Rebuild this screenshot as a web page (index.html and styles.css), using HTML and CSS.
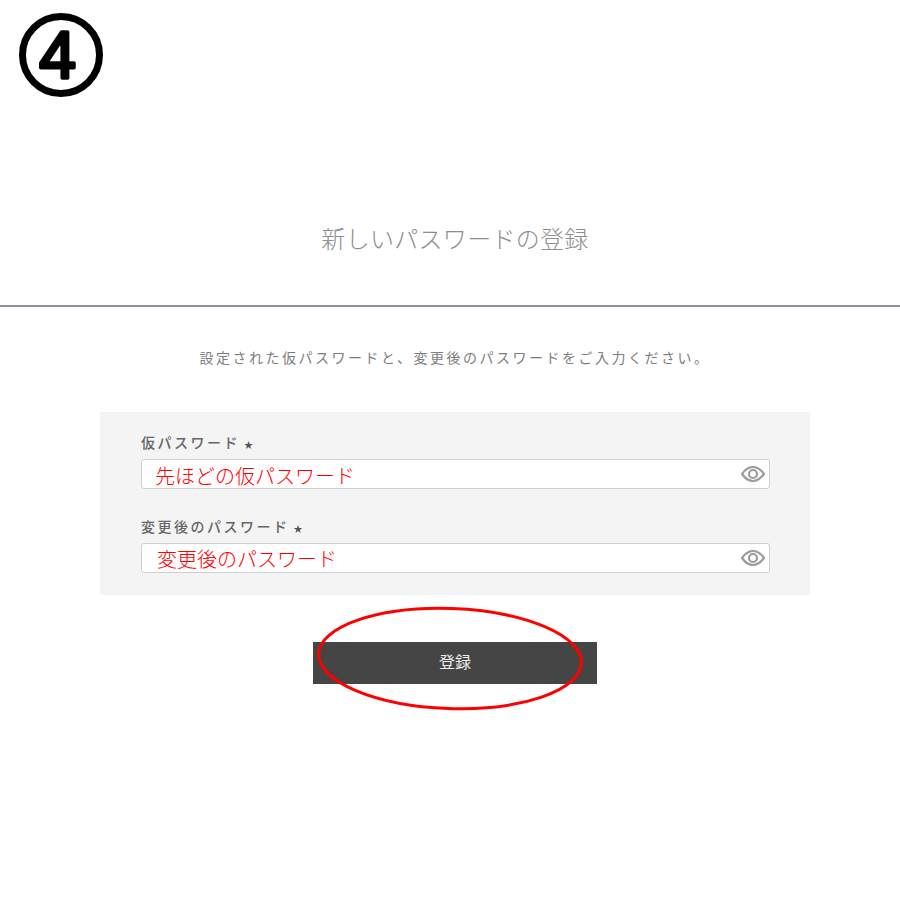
FILE: index.html
```html
<!DOCTYPE html>
<html lang="ja">
<head>
<meta charset="utf-8">
<title>新しいパスワードの登録</title>
<link rel="stylesheet" href="styles.css">
</head>
<body>
<div class="page">
  <div class="step">
    <svg class="step-badge" viewBox="0 0 84 84" width="84" height="84" aria-label="4">
      <circle class="step-ring" cx="42" cy="42" r="38.5"/>
      <text class="step-num" x="38.500" y="65">4</text>
    </svg>
  </div>
  <h1 class="title">新しいパスワードの登録</h1>
  <hr class="rule">
  <p class="lead">設定された仮パスワードと、変更後のパスワードをご入力ください。</p>
  <form class="panel">
    <div class="field">
      <div class="label">仮パスワード<span class="req">★</span></div>
      <div class="input">
        <span class="value">先ほどの仮パスワード</span>
        <svg class="eye" viewBox="0 0 24 16" width="24" height="16"><path d="M1 8C4.500 3 8 1 12 1s7.500 2 11 7c-3.500 5-7 7-11 7S4.500 13 1 8z"/><circle cx="12" cy="8" r="4"/></svg>
      </div>
    </div>
    <div class="field">
      <div class="label">変更後のパスワード<span class="req">★</span></div>
      <div class="input input-alt">
        <span class="value">変更後のパスワード</span>
        <svg class="eye" viewBox="0 0 24 16" width="24" height="16"><path d="M1 8C4.500 3 8 1 12 1s7.500 2 11 7c-3.500 5-7 7-11 7S4.500 13 1 8z"/><circle cx="12" cy="8" r="4"/></svg>
      </div>
    </div>
  </form>
  <div class="actions">
    <div class="submit-wrap">
      <button class="submit" type="button">登録</button>
      <svg class="callout" viewBox="0 0 270 106" width="270" height="106"><ellipse cx="135" cy="53.500" rx="131.500" ry="50" transform="rotate(2 135 53.500)"/></svg>
    </div>
  </div>
</div>
</body>
</html>
```
FILE: styles.css
```css
* { box-sizing: border-box; }
html, body { margin: 0; background: #fff; }
.page {
  width: 900px;
  height: 900px;
  overflow: hidden;
  font-family: "Noto Sans CJK JP", "Noto Sans", sans-serif;
  color: #666;
}
.step { padding: 13px 0 0 19px; height: 97px; }
.step-badge { display: block; }
.step-ring { fill: none; stroke: #000; stroke-width: 7; }
.step-num {
  font-family: "Liberation Sans", sans-serif;
  font-size: 66px;
  font-weight: 400;
  text-anchor: middle;
  fill: #000;
  stroke: #000;
  stroke-width: 3.5;
  stroke-linejoin: round;
}
.title {
  margin: 121px 0 0;
  padding-left: 10px;
  height: 40px;
  line-height: 40px;
  text-align: center;
  font-size: 24px;
  font-weight: 300;
  letter-spacing: 0.3px;
  color: #8e8e8e;
}
.rule {
  margin: 47px 0 0;
  height: 2px;
  border: 0;
  background: #8a919b;
}
.lead {
  margin: 39px 0 0;
  padding-left: 10px;
  height: 22px;
  line-height: 22px;
  text-align: center;
  font-size: 14px;
  font-weight: 400;
  letter-spacing: 2.5px;
  color: #7d7d7d;
}
.panel {
  margin: 44px 0 0 100px;
  width: 710px;
  height: 183px;
  padding: 20px 40px 0 41px;
  background: #f4f4f4;
  display: flex;
  flex-direction: column;
  gap: 27px;
}
.label {
  height: 27px;
  line-height: 20px;
  font-size: 14px;
  font-weight: 500;
  letter-spacing: 2.5px;
  color: #666;
}
.req { margin-left: 4px; font-size: 9px; letter-spacing: 0; color: #555; }
.input {
  height: 30px;
  padding: 0 4px 0 13px;
  background: #fff;
  border: 1px solid #cfcfcf;
  border-radius: 3px;
  display: flex;
  align-items: center;
  justify-content: space-between;
}
.input-alt { padding-left: 15px; }
.value {
  font-size: 20px;
  line-height: 30px;
  color: #f00;
  font-weight: 300;
  position: relative;
  top: 2px;
}
.input-alt .value { top: 1px; }
.eye { display: block; fill: none; stroke: #9c9c98; stroke-width: 2.2; }
.actions { margin-top: 13px; padding-left: 10px; display: flex; justify-content: center; }
.submit-wrap { position: relative; padding-top: 34px; }
.submit {
  display: block;
  width: 284px;
  height: 42px;
  padding: 0 0 4px;
  border: 0;
  background: #454545;
  color: #eee;
  font-family: inherit;
  font-size: 16px;
  font-weight: 400;
}
.callout {
  position: absolute;
  left: 2px;
  top: -3px;
  overflow: visible;
  fill: none;
  stroke: #f00;
  stroke-width: 3;
}
```
